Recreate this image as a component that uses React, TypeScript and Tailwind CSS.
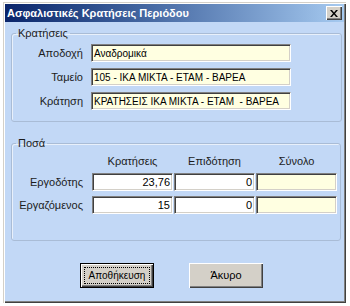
const font = "font-['Liberation_Sans',Arial,sans-serif]";

function Field({ value, yellow = true, right = false, w }: { value: string; yellow?: boolean; right?: boolean; w: string }) {
  return (
    <div
      className={`${w} h-[18px] border border-t-[#808080] border-l-[#808080] border-r-white border-b-white shadow-[inset_1px_1px_0_#404040,inset_-1px_-1px_0_#d4d0c8] ${
        yellow ? 'bg-[#ffffe1]' : 'bg-white'
      } flex items-center px-[2px] text-[10px] text-black whitespace-pre overflow-hidden ${right ? 'justify-end text-[11px]' : ''}`}
    >
      {value}
    </div>
  )
}

export default function App() {
  return (
    <div className={`w-[350px] h-[306px] bg-white pt-[2px] pl-[3px] overflow-hidden ${font}`}>
      <div className="w-[343px] h-[301px] bg-[#c2d8f6] p-[2px] shadow-[inset_1px_1px_0_#d4d0c8,inset_2px_2px_0_#ffffff,inset_-1px_-1px_0_#404040,inset_-2px_-2px_0_#808080] flex flex-col">
        {/* title bar */}
        <div className="h-[18px] bg-gradient-to-r from-[#0a246a] to-[#a6caf0] flex items-center justify-between pl-[2px] pr-[2px]">
          <span className="text-white font-bold text-[11px] leading-none">Ασφαλιστικές Κρατήσεις Περιόδου</span>
          <div className="w-[16px] h-[14px] bg-[#d4d0c8] shadow-[inset_1px_1px_0_#fff,inset_-1px_-1px_0_#404040,inset_-2px_-2px_0_#808080] flex items-center justify-center">
            <svg width="8" height="7" viewBox="0 0 8 7">
              <path d="M0 0h2l2 2.5L6 0h2L5 3.5 8 7H6L4 4.5 2 7H0l3-3.5z" fill="#000" />
            </svg>
          </div>
        </div>

        {/* group 1 */}
        <fieldset className="mt-[5px] ml-[6px] w-[331px] h-[95px] border border-[#a9bcd6] rounded-[3px] shadow-[inset_1px_1px_0_#e8f0fb] px-0 pt-[4px] pb-0">
          <legend className="ml-[4px] px-[2px] text-[11px] leading-[13px] text-[#1c1c1c]">Κρατήσεις</legend>
          <div className="flex flex-col gap-[6px]">
            {[
              ['Αποδοχή', 'Αναδρομικά'],
              ['Ταμείο', '105 - ΙΚΑ ΜΙΚΤΑ - ΕΤΑΜ - ΒΑΡΕΑ'],
              ['Κράτηση', 'ΚΡΑΤΗΣΕΙΣ ΙΚΑ ΜΙΚΤΑ - ΕΤΑΜ  - ΒΑΡΕΑ'],
            ].map(([label, value]) => (
              <div key={label} className="flex items-center gap-[8px]">
                <span className="w-[71px] text-right text-[11px] text-[#1c1c1c]">{label}</span>
                <Field value={value} w="w-[200px]" />
              </div>
            ))}
          </div>
        </fieldset>

        {/* group 2 */}
        <fieldset className="mt-[15px] ml-[6px] w-[330px] h-[104px] border border-[#a9bcd6] rounded-[3px] shadow-[inset_1px_1px_0_#e8f0fb] px-0 pt-[4px] pb-0">
          <legend className="ml-[4px] px-[2px] text-[11px] leading-[13px] text-[#1c1c1c]">Ποσά</legend>
          <div className="flex items-center pl-[80px] gap-[1px] text-[11px] text-[#1c1c1c] h-[14px]">
            <span className="w-[81px] text-center">Κρατήσεις</span>
            <span className="w-[81px] text-center">Επιδότηση</span>
            <span className="w-[81px] text-center">Σύνολο</span>
          </div>
          <div className="flex flex-col gap-[5px] mt-[5px]">
            {[
              ['Εργοδότης', '23,76'],
              ['Εργαζόμενος', '15'],
            ].map(([label, value]) => (
              <div key={label} className="flex items-center">
                <span className="w-[71px] text-right text-[11px] text-[#1c1c1c] mr-[9px] whitespace-nowrap">{label}</span>
                <div className="flex gap-[1px]">
                  <Field value={value} yellow={false} right w="w-[81px]" />
                  <Field value="0" yellow={false} right w="w-[81px]" />
                  <Field value="" w="w-[81px]" />
                </div>
              </div>
            ))}
          </div>
        </fieldset>

        {/* buttons */}
        <div className="flex gap-[35px] pl-[75px] mt-[22px]">
          <button className="w-[74px] h-[25px] bg-[#d4d0c8] border border-black shadow-[inset_1px_1px_0_#fff,inset_-1px_-1px_0_#404040,inset_-2px_-2px_0_#808080] p-[3px] text-[10px] text-black">
            <div className="w-full h-full border border-dotted border-black flex items-center justify-center">Αποθήκευση</div>
          </button>
          <button className="w-[74px] h-[25px] bg-[#d4d0c8] shadow-[inset_1px_1px_0_#fff,inset_-1px_-1px_0_#404040,inset_-2px_-2px_0_#808080] flex items-center justify-center text-[11px] text-black">
            Άκυρο
          </button>
        </div>
      </div>
    </div>
  )
}
